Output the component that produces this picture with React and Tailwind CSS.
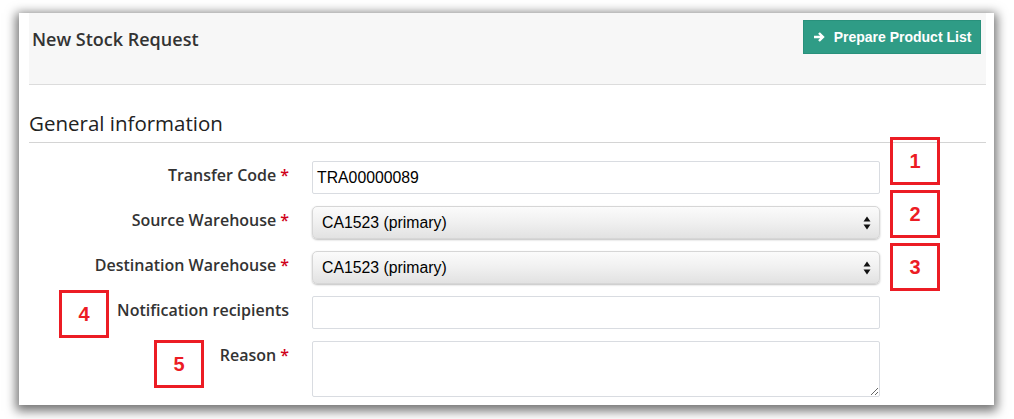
import React from "react";

function Req() {
  return <span className="text-[#d0021b] ml-[4px]">*</span>;
}

function Badge({ n, className }) {
  return (
    <div
      className={
        "absolute w-[50px] h-[48px] border-[3px] border-[#ec1c24] flex items-center justify-center text-[#ec1c24] font-bold text-[20px] " +
        className
      }
      style={{ fontFamily: '"Liberation Sans", Arial, sans-serif' }}
    >
      {n}
    </div>
  );
}

function Arrows() {
  return (
    <svg width="8" height="14" viewBox="0 0 8 14">
      <path d="M4 0.5 L7.5 5.5 L0.5 5.5 Z" fill="#111" />
      <path d="M4 13.5 L7.5 8.5 L0.5 8.5 Z" fill="#111" />
    </svg>
  );
}

function Row({ label, required, children }) {
  return (
    <div className="flex items-start">
      <div
        className="w-[262px] pr-[2px] text-right pt-[3px] text-[16px] leading-[22px] font-semibold text-[#333]"
        style={{ fontFamily: '"Open Sans", sans-serif' }}
      >
        {label}
        {required && <Req />}
      </div>
      <div className="ml-[21px] w-[568px]">{children}</div>
    </div>
  );
}

function Select({ value }) {
  return (
    <div className="h-[33px] rounded-[5px] bg-gradient-to-b from-[#fbfbfb] via-[#f0f0f0] to-[#e2e2e2] shadow-[0_1px_2px_rgba(0,0,0,0.25)] border border-[#d6d6d6] flex items-center justify-between pl-[9px] pr-[8px] text-[15.8px] text-black">
      <span>{value}</span>
      <Arrows />
    </div>
  );
}

export default function App() {
  return (
    <div className="w-[1014px] h-[419px] bg-white relative overflow-hidden">
      <div className="absolute left-[19px] top-[13px] w-[975px] h-[392px] bg-white shadow-[0_3px_10px_3px_rgba(0,0,0,0.55)] pl-[10px] pr-[8px]">
        {/* header */}
        <div className="h-[72px] bg-[#f7f7f7] border-b border-[#dcdcdc] flex items-start justify-between pl-[3px] pr-[5px]">
          <div
            className="mt-[13px] text-[18px] leading-[26px] font-semibold text-[#333]"
            style={{ fontFamily: '"Open Sans", sans-serif' }}
          >
            New Stock Request
          </div>
          <div
            className="mt-[7px] h-[34px] w-[178px] bg-[#2f9c86] border border-[#29917c] flex items-center justify-center gap-[9px] text-white font-bold text-[14px]"
            style={{ fontFamily: '"Liberation Sans", Arial, sans-serif' }}
          >
            <svg width="12" height="12" viewBox="0 0 12 12">
              <path d="M1 6 H10 M6 2 L10 6 L6 10" stroke="white" strokeWidth="2.4" fill="none" />
            </svg>
            <span>Prepare Product List</span>
          </div>
        </div>

        <div
          className="mt-[23px] text-[20.5px] leading-[30px] text-[#222] pb-[4px] border-b border-[#d4d4d4]"
          style={{ fontFamily: '"Open Sans", sans-serif' }}
        >
          General information
        </div>

        <div
          className="mt-[18px] flex flex-col gap-[12px]"
          style={{ fontFamily: '"Liberation Sans", Arial, sans-serif' }}
        >
          <Row label="Transfer Code" required>
            <div className="h-[33px] border border-[#d9dce1] rounded-[2px] flex items-center pl-[4px] text-[15.8px] text-black">
              TRA00000089
            </div>
          </Row>
          <Row label="Source Warehouse" required>
            <Select value="CA1523 (primary)" />
          </Row>
          <Row label="Destination Warehouse" required>
            <Select value="CA1523 (primary)" />
          </Row>
          <Row label="Notification recipients">
            <div className="h-[33px] border border-[#d9dce1] rounded-[2px]" />
          </Row>
          <Row label="Reason" required>
            <textarea className="block w-full h-[56px] border border-[#d9dce1] rounded-[2px] outline-none" />
          </Row>
        </div>
      </div>

      <Badge n="1" className="left-[890px] top-[137px]" />
      <Badge n="2" className="left-[890px] top-[190px]" />
      <Badge n="3" className="left-[890px] top-[243px]" />
      <Badge n="4" className="left-[59px] top-[290px]" />
      <Badge n="5" className="left-[154px] top-[340px]" />
    </div>
  );
}
